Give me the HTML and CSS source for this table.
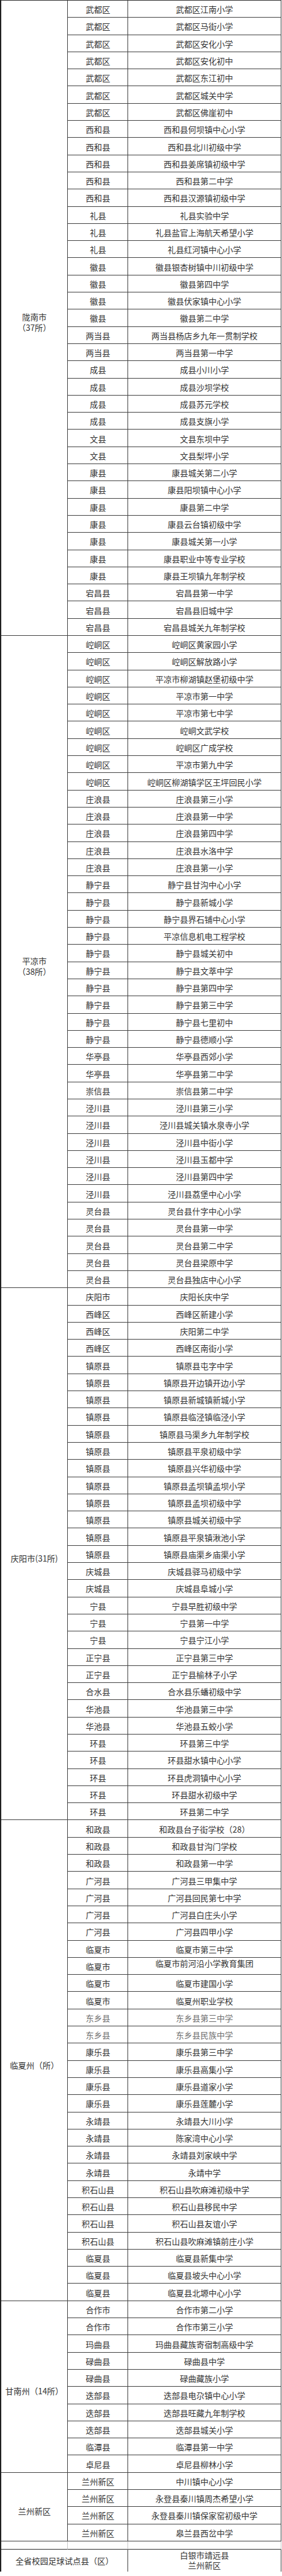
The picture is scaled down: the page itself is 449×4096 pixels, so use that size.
FILE: index.html
```html
<!DOCTYPE html>
<html lang="zh-CN">
<head>
<meta charset="utf-8">
<title>校园足球特色学校名单</title>
<link rel="stylesheet" href="styles.css">
</head>
<body>
<div class="sheet">
  <div class="cell region" style="grid-row: span 37"><span>陇南市</span><span>（37所）</span></div>
  <div class="cell district">武都区</div><div class="cell school">武都区江南小学</div>
  <div class="cell district">武都区</div><div class="cell school">武都区马街小学</div>
  <div class="cell district">武都区</div><div class="cell school">武都区安化小学</div>
  <div class="cell district">武都区</div><div class="cell school">武都区安化初中</div>
  <div class="cell district">武都区</div><div class="cell school">武都区东江初中</div>
  <div class="cell district">武都区</div><div class="cell school">武都区城关中学</div>
  <div class="cell district">武都区</div><div class="cell school">武都区佛崖初中</div>
  <div class="cell district">西和县</div><div class="cell school">西和县何坝镇中心小学</div>
  <div class="cell district">西和县</div><div class="cell school">西和县北川初级中学</div>
  <div class="cell district">西和县</div><div class="cell school">西和县姜席镇初级中学</div>
  <div class="cell district">西和县</div><div class="cell school">西和县第二中学</div>
  <div class="cell district">西和县</div><div class="cell school">西和县汉源镇初级中学</div>
  <div class="cell district">礼县</div><div class="cell school">礼县实验中学</div>
  <div class="cell district">礼县</div><div class="cell school">礼县盐官上海航天希望小学</div>
  <div class="cell district">礼县</div><div class="cell school">礼县红河镇中心小学</div>
  <div class="cell district">徽县</div><div class="cell school">徽县银杏树镇中川初级中学</div>
  <div class="cell district">徽县</div><div class="cell school">徽县第四中学</div>
  <div class="cell district">徽县</div><div class="cell school">徽县伏家镇中心小学</div>
  <div class="cell district">徽县</div><div class="cell school">徽县第二中学</div>
  <div class="cell district">两当县</div><div class="cell school">两当县杨店乡九年一贯制学校</div>
  <div class="cell district">两当县</div><div class="cell school">两当县第一中学</div>
  <div class="cell district">成县</div><div class="cell school">成县小川小学</div>
  <div class="cell district">成县</div><div class="cell school">成县沙坝学校</div>
  <div class="cell district">成县</div><div class="cell school">成县苏元学校</div>
  <div class="cell district">成县</div><div class="cell school">成县支旗小学</div>
  <div class="cell district">文县</div><div class="cell school">文县东坝中学</div>
  <div class="cell district">文县</div><div class="cell school">文县梨坪小学</div>
  <div class="cell district">康县</div><div class="cell school">康县城关第二小学</div>
  <div class="cell district">康县</div><div class="cell school">康县阳坝镇中心小学</div>
  <div class="cell district">康县</div><div class="cell school">康县第二中学</div>
  <div class="cell district">康县</div><div class="cell school">康县云台镇初级中学</div>
  <div class="cell district">康县</div><div class="cell school">康县城关第一小学</div>
  <div class="cell district">康县</div><div class="cell school">康县职业中等专业学校</div>
  <div class="cell district">康县</div><div class="cell school">康县王坝镇九年制学校</div>
  <div class="cell district">宕昌县</div><div class="cell school">宕昌县第一中学</div>
  <div class="cell district">宕昌县</div><div class="cell school">宕昌县旧城中学</div>
  <div class="cell district">宕昌县</div><div class="cell school">宕昌县城关九年制学校</div>

  <div class="cell region" style="grid-row: span 38"><span>平凉市</span><span>（38所）</span></div>
  <div class="cell district">崆峒区</div><div class="cell school">崆峒区黄家园小学</div>
  <div class="cell district">崆峒区</div><div class="cell school">崆峒区解放路小学</div>
  <div class="cell district">崆峒区</div><div class="cell school">平凉市柳湖镇赵堡初级中学</div>
  <div class="cell district">崆峒区</div><div class="cell school">平凉市第一中学</div>
  <div class="cell district">崆峒区</div><div class="cell school">平凉市第七中学</div>
  <div class="cell district">崆峒区</div><div class="cell school">崆峒文武学校</div>
  <div class="cell district">崆峒区</div><div class="cell school">崆峒区广成学校</div>
  <div class="cell district">崆峒区</div><div class="cell school">平凉市第九中学</div>
  <div class="cell district">崆峒区</div><div class="cell school">崆峒区柳湖镇学区王坪回民小学</div>
  <div class="cell district">庄浪县</div><div class="cell school">庄浪县第三小学</div>
  <div class="cell district">庄浪县</div><div class="cell school">庄浪县第一中学</div>
  <div class="cell district">庄浪县</div><div class="cell school">庄浪县第四中学</div>
  <div class="cell district">庄浪县</div><div class="cell school">庄浪县水洛中学</div>
  <div class="cell district">庄浪县</div><div class="cell school">庄浪县第一小学</div>
  <div class="cell district">静宁县</div><div class="cell school">静宁县甘沟中心小学</div>
  <div class="cell district">静宁县</div><div class="cell school">静宁县新城小学</div>
  <div class="cell district">静宁县</div><div class="cell school">静宁县界石铺中心小学</div>
  <div class="cell district">静宁县</div><div class="cell school">平凉信息机电工程学校</div>
  <div class="cell district">静宁县</div><div class="cell school">静宁县城关初中</div>
  <div class="cell district">静宁县</div><div class="cell school">静宁县文萃中学</div>
  <div class="cell district">静宁县</div><div class="cell school">静宁县第四中学</div>
  <div class="cell district">静宁县</div><div class="cell school">静宁县第三中学</div>
  <div class="cell district">静宁县</div><div class="cell school">静宁县七里初中</div>
  <div class="cell district">静宁县</div><div class="cell school">静宁县德顺小学</div>
  <div class="cell district">华亭县</div><div class="cell school">华亭县西郊小学</div>
  <div class="cell district">华亭县</div><div class="cell school">华亭县第二中学</div>
  <div class="cell district">崇信县</div><div class="cell school">崇信县第二中学</div>
  <div class="cell district">泾川县</div><div class="cell school">泾川县第三小学</div>
  <div class="cell district">泾川县</div><div class="cell school">泾川县城关镇水泉寺小学</div>
  <div class="cell district">泾川县</div><div class="cell school">泾川县中街小学</div>
  <div class="cell district">泾川县</div><div class="cell school">泾川县玉都中学</div>
  <div class="cell district">泾川县</div><div class="cell school">泾川县第四中学</div>
  <div class="cell district">泾川县</div><div class="cell school">泾川县荔堡中心小学</div>
  <div class="cell district">灵台县</div><div class="cell school">灵台县什字中心小学</div>
  <div class="cell district">灵台县</div><div class="cell school">灵台县第一中学</div>
  <div class="cell district">灵台县</div><div class="cell school">灵台县第二中学</div>
  <div class="cell district">灵台县</div><div class="cell school">灵台县梁原中学</div>
  <div class="cell district">灵台县</div><div class="cell school">灵台县独店中心小学</div>

  <div class="cell region" style="grid-row: span 31"><span>庆阳市(31所)</span></div>
  <div class="cell district">庆阳市</div><div class="cell school">庆阳长庆中学</div>
  <div class="cell district">西峰区</div><div class="cell school">西峰区新建小学</div>
  <div class="cell district">西峰区</div><div class="cell school">庆阳第二中学</div>
  <div class="cell district">西峰区</div><div class="cell school">西峰区南街小学</div>
  <div class="cell district">镇原县</div><div class="cell school">镇原县屯字中学</div>
  <div class="cell district">镇原县</div><div class="cell school">镇原县开边镇开边小学</div>
  <div class="cell district">镇原县</div><div class="cell school">镇原县新城镇新城小学</div>
  <div class="cell district">镇原县</div><div class="cell school">镇原县临泾镇临泾小学</div>
  <div class="cell district">镇原县</div><div class="cell school">镇原县马渠乡九年制学校</div>
  <div class="cell district">镇原县</div><div class="cell school">镇原县平泉初级中学</div>
  <div class="cell district">镇原县</div><div class="cell school">镇原县兴华初级中学</div>
  <div class="cell district">镇原县</div><div class="cell school">镇原县孟坝镇孟坝小学</div>
  <div class="cell district">镇原县</div><div class="cell school">镇原县孟坝初级中学</div>
  <div class="cell district">镇原县</div><div class="cell school">镇原县城关初级中学</div>
  <div class="cell district">镇原县</div><div class="cell school">镇原县平泉镇湫池小学</div>
  <div class="cell district">镇原县</div><div class="cell school">镇原县庙渠乡庙渠小学</div>
  <div class="cell district">庆城县</div><div class="cell school">庆城县驿马初级中学</div>
  <div class="cell district">庆城县</div><div class="cell school">庆城县阜城小学</div>
  <div class="cell district">宁县</div><div class="cell school">宁县早胜初级中学</div>
  <div class="cell district">宁县</div><div class="cell school">宁县第一中学</div>
  <div class="cell district">宁县</div><div class="cell school">宁县宁江小学</div>
  <div class="cell district">正宁县</div><div class="cell school">正宁县第三中学</div>
  <div class="cell district">正宁县</div><div class="cell school">正宁县榆林子小学</div>
  <div class="cell district">合水县</div><div class="cell school">合水县乐蟠初级中学</div>
  <div class="cell district">华池县</div><div class="cell school">华池县第三中学</div>
  <div class="cell district">华池县</div><div class="cell school">华池县五蛟小学</div>
  <div class="cell district">环县</div><div class="cell school">环县第三中学</div>
  <div class="cell district">环县</div><div class="cell school">环县甜水镇中心小学</div>
  <div class="cell district">环县</div><div class="cell school">环县虎洞镇中心小学</div>
  <div class="cell district">环县</div><div class="cell school">环县甜水初级中学</div>
  <div class="cell district">环县</div><div class="cell school">环县第二中学</div>

  <div class="cell region" style="grid-row: span 28"><span>临夏州（所）</span></div>
  <div class="cell district">和政县</div><div class="cell school">和政县台子街学校（28）</div>
  <div class="cell district">和政县</div><div class="cell school">和政县甘沟门学校</div>
  <div class="cell district">和政县</div><div class="cell school">和政县第一中学</div>
  <div class="cell district">广河县</div><div class="cell school">广河县三甲集中学</div>
  <div class="cell district">广河县</div><div class="cell school">广河县回民第七中学</div>
  <div class="cell district">广河县</div><div class="cell school">广河县白庄头小学</div>
  <div class="cell district">广河县</div><div class="cell school">广河县四甲小学</div>
  <div class="cell district">临夏市</div><div class="cell school">临夏市第三中学</div>
  <div class="cell district">临夏市</div><div class="cell school raised">临夏市前河沿小学教育集团</div>
  <div class="cell district">临夏市</div><div class="cell school">临夏市建国小学</div>
  <div class="cell district">临夏市</div><div class="cell school">临夏州职业学校</div>
  <div class="cell district dim">东乡县</div><div class="cell school dim">东乡县第三中学</div>
  <div class="cell district dim">东乡县</div><div class="cell school dim">东乡县民族中学</div>
  <div class="cell district">康乐县</div><div class="cell school">康乐县第三中学</div>
  <div class="cell district">康乐县</div><div class="cell school">康乐县高集小学</div>
  <div class="cell district">康乐县</div><div class="cell school">康乐县道家小学</div>
  <div class="cell district">康乐县</div><div class="cell school">康乐县莲麓小学</div>
  <div class="cell district">永靖县</div><div class="cell school">永靖县大川小学</div>
  <div class="cell district">永靖县</div><div class="cell school">陈家湾中心小学</div>
  <div class="cell district">永靖县</div><div class="cell school">永靖县刘家峡中学</div>
  <div class="cell district">永靖县</div><div class="cell school">永靖中学</div>
  <div class="cell district">积石山县</div><div class="cell school">积石山县吹麻滩初级中学</div>
  <div class="cell district">积石山县</div><div class="cell school">积石山县移民中学</div>
  <div class="cell district">积石山县</div><div class="cell school">积石山县友谊小学</div>
  <div class="cell district">积石山县</div><div class="cell school">积石山县吹麻滩镇前庄小学</div>
  <div class="cell district">临夏县</div><div class="cell school">临夏县新集中学</div>
  <div class="cell district">临夏县</div><div class="cell school">临夏县坡头中心小学</div>
  <div class="cell district">临夏县</div><div class="cell school">临夏县北塬中心小学</div>

  <div class="cell region" style="grid-row: span 10"><span>甘南州（14所）</span></div>
  <div class="cell district">合作市</div><div class="cell school">合作市第二小学</div>
  <div class="cell district">合作市</div><div class="cell school">合作市第三小学</div>
  <div class="cell district">玛曲县</div><div class="cell school">玛曲县藏族寄宿制高级中学</div>
  <div class="cell district">碌曲县</div><div class="cell school">碌曲县中学</div>
  <div class="cell district">碌曲县</div><div class="cell school">碌曲藏族小学</div>
  <div class="cell district">迭部县</div><div class="cell school">迭部县电尕镇中心小学</div>
  <div class="cell district">迭部县</div><div class="cell school">迭部县旺藏九年制学校</div>
  <div class="cell district">迭部县</div><div class="cell school">迭部县城关小学</div>
  <div class="cell district">临潭县</div><div class="cell school">临潭县第一中学</div>
  <div class="cell district">卓尼县</div><div class="cell school">卓尼县柳林小学</div>

  <div class="cell region" style="grid-row: span 4"><span>兰州新区</span></div>
  <div class="cell district">兰州新区</div><div class="cell school">中川镇中心小学</div>
  <div class="cell district">兰州新区</div><div class="cell school">永登县秦川镇周杰希望小学</div>
  <div class="cell district">兰州新区</div><div class="cell school">永登县秦川镇保家窑初级中学</div>
  <div class="cell district">兰州新区</div><div class="cell school">皋兰县西岔中学</div>

  <div class="cell gap gap-first"></div><div class="cell gap"></div><div class="cell gap"></div>

  <div class="cell foot-label">全省校园足球试点县（区）</div>
  <div class="cell foot-value"><span>白银市靖远县</span><span>兰州新区</span></div>
</div>
</body>
</html>
```

FILE: styles.css
```css
html, body {
  margin: 0;
  padding: 0;
  background: #ffffff;
}

body {
  font-family: "Noto Sans CJK SC", "Noto Sans", sans-serif;
  font-size: 13px;
  color: #333333;
}

.sheet {
  display: grid;
  grid-template-columns: 106.3px 96.2px 243.1px;
  width: max-content;
  border-top: 1px solid #333333;
  border-left: 2px solid #222222;
}

.cell {
  box-sizing: border-box;
  display: flex;
  align-items: center;
  justify-content: center;
  text-align: center;
  line-height: 16px;
  white-space: nowrap;
  border-right: 1px solid #444444;
  border-bottom: 1px solid #444444;
}

.region {
  grid-column: 1;
  flex-direction: column;
  line-height: 17px;
  padding-top: 14px;
}

.district {
  grid-column: 2;
  height: 27.3px;
  padding-top: 2px;
}

.school {
  grid-column: 3;
  height: 27.3px;
  padding-top: 2px;
}

.school.raised {
  align-items: flex-start;
  padding-top: 1px;
}

.dim {
  color: #6e6e6e;
}

.gap {
  height: 12.6px;
  border-right-color: #c8c8c8;
  border-bottom-color: #333333;
}

.foot-label {
  grid-column: 1 / 3;
  height: 35px;
  border-bottom: none;
  padding-top: 2px;
}

.foot-value {
  grid-column: 3;
  height: 35px;
  flex-direction: column;
  border-bottom: none;
  line-height: 16px;
}
```
